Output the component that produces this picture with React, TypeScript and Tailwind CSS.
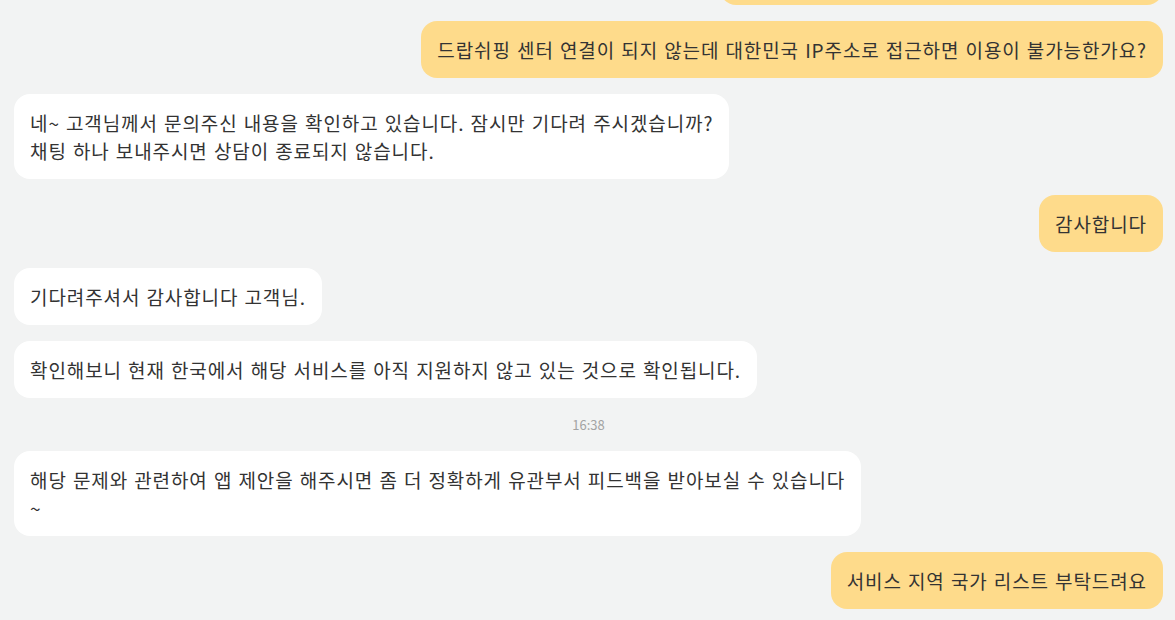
type Msg = { from: 'me' | 'agent' | 'time'; text: string };

const messages: Msg[] = [
	{ from: 'me', text: '혹시 확인 부탁드립니다. 접속이 계속 안되네요 ㅠ' },
	{ from: 'me', text: '드랍쉬핑 센터 연결이 되지 않는데 대한민국 IP주소로 접근하면 이용이 불가능한가요?' },
	{ from: 'agent', text: '네~ 고객님께서 문의주신 내용을 확인하고 있습니다. 잠시만 기다려 주시겠습니까?\n채팅 하나 보내주시면 상담이 종료되지 않습니다.' },
	{ from: 'me', text: '감사합니다' },
	{ from: 'agent', text: '기다려주셔서 감사합니다 고객님.' },
	{ from: 'agent', text: '확인해보니 현재 한국에서 해당 서비스를 아직 지원하지 않고 있는 것으로 확인됩니다.' },
	{ from: 'time', text: '16:38' },
	{ from: 'agent', text: '해당 문제와 관련하여 앱 제안을 해주시면 좀 더 정확하게 유관부서 피드백을 받아보실 수 있습니다\n~' },
	{ from: 'me', text: '서비스 지역 국가 리스트 부탁드려요' },
];

function Bubble({ msg }: { msg: Msg }) {
	if (msg.from === 'time') {
		return <div className="text-center text-[13px] leading-[21px] text-[#a3a3a3]">{msg.text}</div>;
	}
	const mine = msg.from === 'me';
	return (
		<div className={mine ? 'flex justify-end' : 'flex justify-start'}>
			<div
				className={
					'max-w-[849px] whitespace-pre-line break-keep rounded-2xl px-4 pt-[15px] pb-[14px] text-[19px] leading-[28px] tracking-[0.9px] [word-spacing:1px] text-[#333333] ' +
					(mine ? 'bg-[#fedb8b]' : 'bg-white')
				}
			>
				{msg.text}
			</div>
		</div>
	);
}

export default function App() {
	return (
		<div
			className="flex h-[620px] w-full flex-col justify-end gap-4 overflow-hidden bg-[#f2f3f3] pl-[14px] pr-[12px] pb-[11px]"
			style={{ fontFamily: '"Noto Sans CJK KR", "Noto Sans", sans-serif' }}
		>
			{messages.map((m, i) => (
				<Bubble key={i} msg={m} />
			))}
		</div>
	);
}
